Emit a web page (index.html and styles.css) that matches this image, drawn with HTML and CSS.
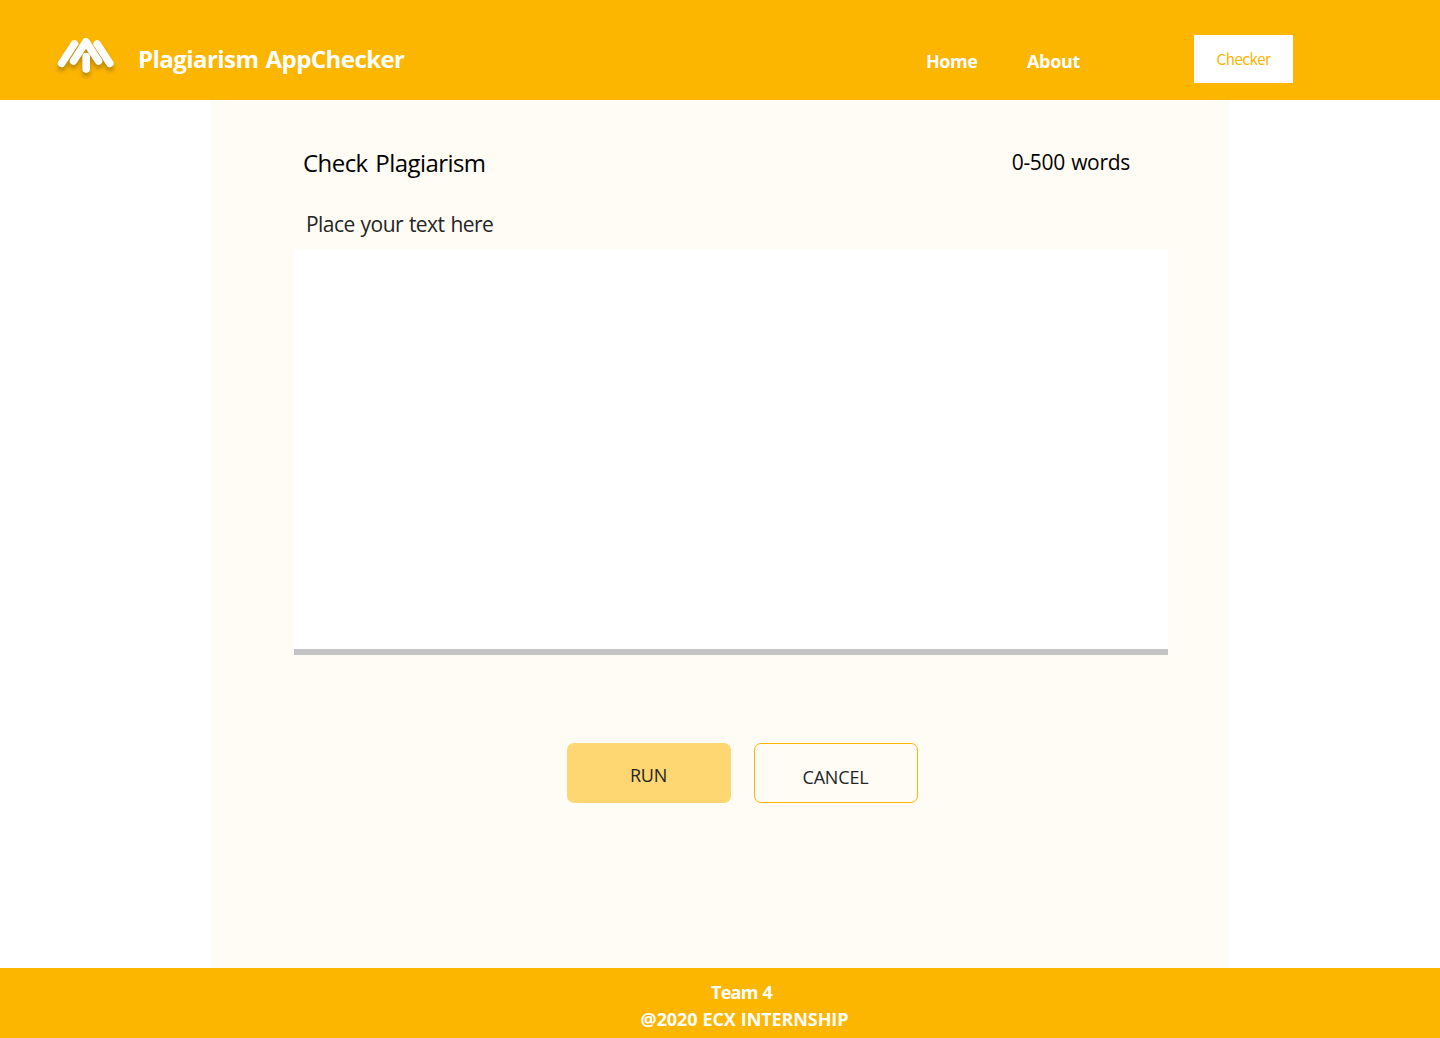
FILE: index.html
```html
<!DOCTYPE html>
<html lang="en">
<head>
<meta charset="utf-8">
<title>Plagiarism AppChecker</title>
<link rel="stylesheet" href="styles.css">
</head>
<body>
<header class="header">
  <svg class="logo" width="76" height="60" viewBox="48 30 76 60" aria-hidden="true">
    <g fill="none" stroke="#fff" stroke-width="7.6" stroke-linecap="round" stroke-linejoin="round">
      <path d="M61.6 63.4 74.4 44M97.2 44 109.8 63.4"/>
      <path d="M73.5 61 86 41.9 98.5 61"/>
      <path d="M86.2 56.5V69.1"/>
    </g>
  </svg>
  <div class="brand">Plagiarism AppChecker</div>
  <nav class="nav">
    <a class="link home">Home</a>
    <a class="link about">About</a>
    <a class="checker">Checker</a>
  </nav>
</header>
<main class="main">
  <div class="heading">
    <h1 class="title">Check Plagiarism</h1>
    <span class="words">0-500 words</span>
  </div>
  <label class="label" for="text"><span>Place your text here</span></label>
  <textarea class="text" id="text"></textarea>
  <div class="actions">
    <button class="button run">RUN</button>
    <button class="button cancel">CANCEL</button>
  </div>
</main>
<footer class="footer">
  <div class="team">Team 4</div>
  <div class="copy">@2020 ECX INTERNSHIP</div>
</footer>
</body>
</html>
```
FILE: styles.css
```css
* { box-sizing: border-box; }
body {
  margin: 0;
  height: 1038px;
  display: flex;
  flex-direction: column;
  background: #fff;
  font-family: "Open Sans", "Noto Sans", sans-serif;
}
.header {
  height: 100px;
  display: flex;
  align-items: flex-start;
  padding: 30px 147px 0 48px;
  background: #fcb600;
  color: #fff;
}
.logo { flex: none; filter: drop-shadow(0 4px 2px rgba(0, 0, 0, .25)); }
.brand {
  margin: 13px 0 0 14px;
  font-size: 24px;
  line-height: 32px;
  font-weight: 700;
  letter-spacing: -.56px;
  word-spacing: 1.5px;
  white-space: nowrap;
}
.nav { margin-left: auto; display: flex; align-items: flex-start; }
.link { margin-top: 19px; font-size: 18px; line-height: 24px; font-weight: 700; letter-spacing: -.45px; }
.home { width: 101px; }
.about { width: 167px; letter-spacing: -.3px; }
.checker {
  width: 99px;
  height: 48px;
  margin-top: 5px;
  background: #fff;
  color: #fcb600;
  font-family: "Noto Sans CJK SC", "Open Sans", sans-serif;
  font-size: 15px;
  letter-spacing: -.4px;
  line-height: 48px;
  text-align: center;
}
.main {
  width: 1018px;
  height: 868px;
  margin-left: 211px;
  padding: 46px 61px 0 83px;
  background: #fffcf5;
}
.heading { display: flex; justify-content: space-between; padding: 0 38px 0 9px; }
.title { margin: 0; font-size: 24px; line-height: 34px; font-weight: 400; letter-spacing: -.56px; word-spacing: 2px; color: #000; }
.words { font-size: 21px; line-height: 32px; letter-spacing: -.3px; word-spacing: 1px; color: #000; }
.label { display: block; margin-top: 29px; padding-left: 12px; font-size: 21px; line-height: 30px; letter-spacing: -.55px; word-spacing: 1px; color: #252525; }
.text {
  display: block;
  width: 874px;
  height: 406px;
  margin-top: 10px;
  padding: 12px;
  border: 0;
  border-bottom: 6px solid #c4c4c4;
  background: #fff;
  font: 21px "Open Sans", sans-serif;
  resize: none;
  outline: none;
}
.actions { display: flex; gap: 23px; margin: 88px 0 0 273px; }
.button {
  width: 164px;
  height: 60px;
  border: 0;
  border-radius: 7px;
  font: 18px/24px "Open Sans", "Noto Sans", sans-serif;
  color: #252525;
}
.run { padding: 4px 1px 0 0; background: #fed672; letter-spacing: -.2px; }
.cancel { padding: 8px 1px 0 0; border: 1px solid #fcb600; background: transparent; letter-spacing: -.15px; }
.footer {
  height: 70px;
  padding-top: 11px;
  background: #fcb600;
  color: #fff;
  font-size: 18px;
  line-height: 27px;
  font-weight: 700;
  text-align: center;
}
.team { padding-left: 43px; letter-spacing: -.8px; word-spacing: 1px; }
.copy { padding-left: 49px; letter-spacing: -.1px; word-spacing: .5px; }
```
